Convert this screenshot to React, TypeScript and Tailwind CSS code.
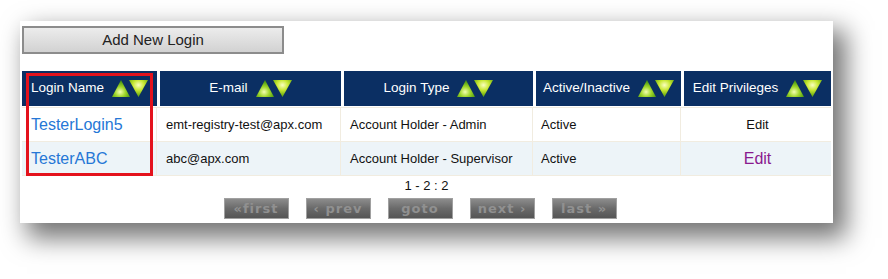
import React from "react";

const columns = [
  { label: "Login Name", width: "w-[135px]" },
  { label: "E-mail", width: "w-[181px]" },
  { label: "Login Type", width: "w-[189px]" },
  { label: "Active/Inactive", width: "w-[145px]" },
  { label: "Edit Privileges", width: "w-[147px]" },
];

const rows = [
  {
    name: "TesterLogin5",
    email: "emt-registry-test@apx.com",
    type: "Account Holder - Admin",
    status: "Active",
    visited: false,
  },
  {
    name: "TesterABC",
    email: "abc@apx.com",
    type: "Account Holder - Supervisor",
    status: "Active",
    visited: true,
  },
];

function SortArrows() {
  return (
    <svg width="36" height="18" viewBox="0 0 36 18" className="shrink-0">
      <defs>
        <radialGradient id="upG" cx="0.45" cy="0.7" r="0.6">
          <stop offset="0" stopColor="#f4ffb0" />
          <stop offset="0.5" stopColor="#9fd62a" />
          <stop offset="1" stopColor="#4f9a10" />
        </radialGradient>
        <radialGradient id="downG" cx="0.5" cy="0.3" r="0.6">
          <stop offset="0" stopColor="#fbffc0" />
          <stop offset="0.5" stopColor="#c8e832" />
          <stop offset="1" stopColor="#6fae12" />
        </radialGradient>
      </defs>
      <polygon points="9,0 18,17 0,17" fill="url(#upG)" />
      <polygon points="17,0 36,0 26.5,17" fill="url(#downG)" />
    </svg>
  );
}

function PageButton({ label }: { label: string }) {
  return (
    <div className="flex h-[21px] w-[65px] items-center justify-center border border-[#a0a0a0] bg-gradient-to-b from-[#8c8c8c] via-[#6a6a6a] to-[#555555] text-[13px] font-bold tracking-[1px] text-[#909090] [font-family:'DejaVu_Sans',sans-serif]">
      {label}
    </div>
  );
}

export default function App() {
  return (
    <div className="h-[279px] w-[888px] overflow-hidden bg-white pl-[20px] pt-[21px] [font-family:'Liberation_Sans',Arial,sans-serif]">
      <div className="relative h-[202px] w-[813px] bg-white pl-[2px] pt-[5px] shadow-[10px_12px_24px_3px_rgba(0,0,0,0.55)]">
        <button className="h-[28px] w-[262px] border-2 border-[#8c8c8c] bg-gradient-to-b from-[#ececec] to-[#d2d2d2] text-[15px] text-[#222]">
          Add New Login
        </button>

        <div className="mt-[17px] w-[809px]">
          {/* header */}
          <div className="flex gap-[3px]">
            {columns.map((c) => (
              <div
                key={c.label}
                className={`${c.width} flex h-[35px] items-center justify-center gap-[8px] bg-[#0b2f63] text-[13.5px] text-white`}
              >
                <span className="whitespace-nowrap">{c.label}</span>
                <SortArrows />
              </div>
            ))}
          </div>

          {/* rows */}
          <div className="mt-[1px] border-b border-[#f1ece0]">
            {rows.map((r, i) => (
              <div
                key={r.name}
                className={`flex gap-[3px] border-t border-[#f1ece0] ${i === 1 ? "bg-[#edf4f8]" : "bg-white"}`}
              >
                <div className="flex h-[33px] w-[135px] items-center border-r border-[#f1ece0] pl-[9px] text-[16px] text-[#2577d6]">
                  {r.name}
                </div>
                <div className="flex h-[33px] w-[181px] items-center border-r border-[#f1ece0] pl-[6px] text-[13px] text-[#111]">
                  {r.email}
                </div>
                <div className="flex h-[33px] w-[189px] items-center border-r border-[#f1ece0] pl-[6px] text-[13px] text-[#111]">
                  {r.type}
                </div>
                <div className="flex h-[33px] w-[145px] items-center border-r border-[#f1ece0] pl-[5px] text-[13px] text-[#111]">
                  {r.status}
                </div>
                <div
                  className={`flex h-[33px] w-[147px] items-center justify-center ${r.visited ? "text-[16px] text-[#8a1a8e]" : "text-[13px] text-[#111]"}`}
                >
                  Edit
                </div>
              </div>
            ))}
          </div>

          <div className="mt-[2px] flex justify-center text-[13px] leading-[15px] text-[#111]">
            1 - 2 : 2
          </div>

          <div className="mt-[5px] flex justify-center gap-[17px] pr-[13px]">
            <PageButton label="«first" />
            <PageButton label="‹ prev" />
            <PageButton label="goto" />
            <PageButton label="next ›" />
            <PageButton label="last »" />
          </div>
        </div>

        {/* red highlight box over the Login Name column */}
        <div className="absolute left-[6px] top-[52px] h-[103px] w-[127px] border-[3px] border-[#e4121c]" />
      </div>
    </div>
  );
}
